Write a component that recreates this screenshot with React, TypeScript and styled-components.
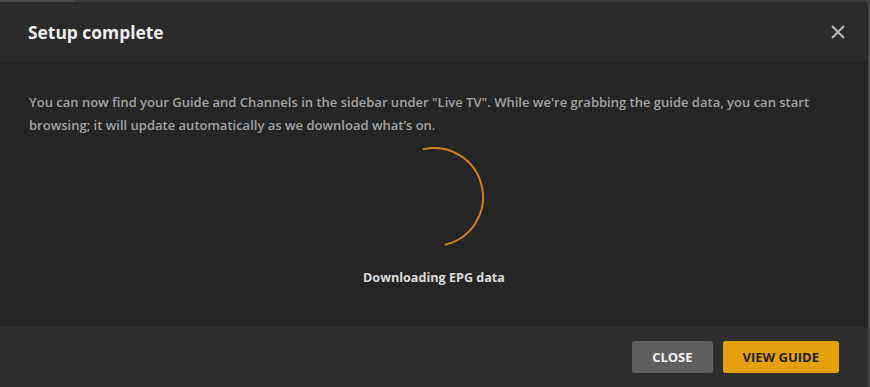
import React from "react";
import styled, { createGlobalStyle } from "styled-components";

const Global = createGlobalStyle`
  html, body { margin: 0; padding: 0; }
  body {
    background: linear-gradient(to right, #4b4b4b 0 75px, #3a3a3a 75px 866px, #464646 866px);
    font-family: "Open Sans", "Noto Sans", sans-serif;
    width: 870px;
    height: 387px;
    overflow: hidden;
  }
`;

const Modal = styled.div`
  margin-top: 2px;
  width: 868px;
  height: 385px;
  display: flex;
  flex-direction: column;
`;

const Header = styled.header`
  height: 60px;
  background: #2b2b2b;
  display: flex;
  align-items: center;
  justify-content: space-between;
  padding: 0 20px 0 28px;
`;

const Title = styled.h2`
  margin: 0;
  font-size: 17.4px;
  font-weight: 700;
  color: #eeeeee;
`;

const CloseIcon = styled.button`
  width: 20px;
  height: 20px;
  padding: 0;
  border: 0;
  background: none;
  display: flex;
  align-items: center;
  justify-content: center;
  color: #bdbdbd;
`;

const Body = styled.main`
  flex: 1;
  background: #252525;
  display: flex;
  flex-direction: column;
  align-items: center;
  padding: 29px 29px 0;
`;

const Message = styled.p`
  margin: 0;
  align-self: stretch;
  font-size: 13px;
  font-weight: 600;
  line-height: 23px;
  color: #a3a3a3;
`;

const Spinner = styled.svg`
  margin-top: 10px;
  display: block;
`;

const Status = styled.div`
  margin-top: 21px;
  font-size: 12.6px;
  font-weight: 700;
  line-height: 20px;
  color: #dcdcdc;
`;

const Footer = styled.footer`
  height: 60px;
  background: #2e2e2e;
  display: flex;
  align-items: center;
  justify-content: flex-end;
  gap: 10px;
  padding: 0 29px;
`;

const Button = styled.button<{ $primary?: boolean }>`
  height: 32px;
  padding: 0 20px;
  border: 0;
  border-radius: 3px;
  font-family: "Open Sans", "Noto Sans", sans-serif;
  font-size: 13px;
  font-weight: 700;
  text-transform: uppercase;
  background: ${(p) => (p.$primary ? "#e5a00d" : "#5f5f5f")};
  color: ${(p) => (p.$primary ? "#1f1f1f" : "#f2f2f2")};
`;

export default function App() {
  const r = 49;
  const c = 2 * Math.PI * r;
  return (
    <>
      <Global />
      <Modal>
        <Header>
          <Title>Setup complete</Title>
          <CloseIcon aria-label="Close">
            <svg width="14" height="14" viewBox="0 0 14 14">
              <path d="M1 1 L13 13 M13 1 L1 13" stroke="currentColor" strokeWidth="2" />
            </svg>
          </CloseIcon>
        </Header>
        <Body>
          <Message>
            You can now find your Guide and Channels in the sidebar under "Live TV". While we're grabbing the guide data, you can start browsing; it will update automatically as we download what’s on.
          </Message>
          <Spinner width="100" height="100" viewBox="0 0 100 100">
            <circle
              cx="50"
              cy="50"
              r={r}
              fill="none"
              stroke="#cc7f1c"
              strokeWidth="2"
              strokeDasharray={`${c / 2} ${c}`}
              transform="rotate(-103 50 50)"
            />
          </Spinner>
          <Status>Downloading EPG data</Status>
        </Body>
        <Footer>
          <Button>Close</Button>
          <Button $primary>View Guide</Button>
        </Footer>
      </Modal>
    </>
  );
}
